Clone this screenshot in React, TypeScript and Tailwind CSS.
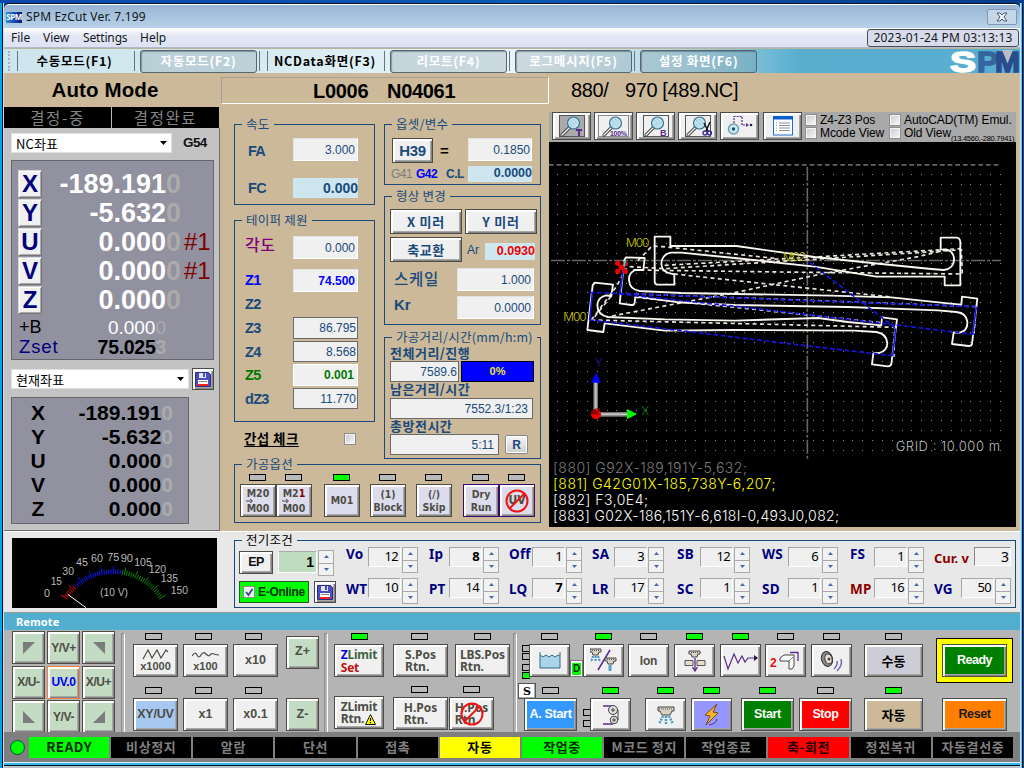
import React from "react";
import type { ReactNode } from "react";

const bevel =
  "flex shrink-0 items-center justify-center border border-[#4d4d45] shadow-[inset_1px_1px_0_#fff,inset_2px_2px_0_#fff,inset_-1px_-1px_0_#858585,inset_-2px_-2px_0_#a8a8a8]";
const sans = "[font-family:'Liberation_Sans','Noto_Sans_CJK_KR',sans-serif]";
const kr = "[font-family:'Noto_Sans_CJK_KR','Noto_Sans',sans-serif]";
const noto = "[font-family:'Noto_Sans','Noto_Sans_CJK_KR',sans-serif]";
const dejavu = "[font-family:'DejaVu_Sans_Condensed','DejaVu_Sans',sans-serif]";

function Led({ on, className = "" }: { on?: boolean; className?: string }) {
  return (
    <span
      className={`block h-[7px] w-[17px] shrink-0 border border-black ${on ? "bg-[#00ff00]" : "bg-[#b9b9b9]"} ${className}`}
    />
  );
}

function Group({
  title,
  className = "",
  legendClass = "bg-[#cbb99a] text-[#1a4a7c]",
  children,
}: {
  title: string;
  className?: string;
  legendClass?: string;
  children: ReactNode;
}) {
  return (
    <section className={`relative border border-[#1a4a7c] ${className}`}>
      <span className={`absolute -top-[9px] left-[7px] h-[15px] px-[4px] text-[12.500px] leading-[15px] tracking-[0.25px] ${kr} ${legendClass}`}>
        {title}
      </span>
      {children}
    </section>
  );
}

function Field({ className = "", children }: { className?: string; children: ReactNode }) {
  return <div className={`flex shrink-0 items-center justify-end ${className}`}>{children}</div>;
}
const sunken = "border border-[#dfe3e8] border-b-white border-r-white bg-[#f0f0f0] text-[12px] text-[#1a4a7c]";
const boxed = "border border-[#6b6b6b] bg-[#f0f0f0] text-[12px] text-[#1a4a7c]";

/* ---------- Title, menu and tool bars ---------- */

function TitleBar() {
  return (
    <header className="flex h-[24px] shrink-0 items-center rounded-t-[5px] border-t border-white bg-gradient-to-b from-[#98b4d2] to-[#b9d2ea]">
      <span className="ml-[2px] mt-[1px] flex h-[11px] w-[16px] items-center justify-center bg-gradient-to-r from-[#2a9ad8] via-[#1c4db0] to-[#0a1c78] text-[8px] font-bold tracking-[-0.5px] text-white">
        SPM
      </span>
      <span className={`ml-[4px] text-[12px] tracking-[0.17px] text-[#101820] ${noto}`}>SPM EzCut Ver. 7.199</span>
      <span className="ml-auto mr-[3px] flex h-[16px] w-[30px] items-center justify-center rounded-[2px] border border-[#8198b4] bg-[#c3d6ea]">
        <svg width="12" height="10" viewBox="0 0 12 10">
          <path d="M1 1h3l2 2 2-2h3L8 5l3 4H8L6 7 4 9H1l3-4z" fill="#eef3f8" stroke="#4a5568" strokeWidth="1" />
        </svg>
      </span>
    </header>
  );
}

function MenuBar() {
  return (
    <nav className={`flex h-[19px] shrink-0 items-center bg-gradient-to-b from-white via-[#e4e8f4] via-40% to-[#dde2f3] text-[12px] text-[#14181f] ${noto}`}>
      <span className="ml-[7px] w-[32px]">File</span>
      <span className="w-[40px]">View</span>
      <span className="w-[57px] tracking-[-0.15px]">Settings</span>
      <span>Help</span>
      <span className="ml-auto mr-[1px] flex h-[18px] w-[152px] items-center justify-center rounded-[3px] border-[1.5px] border-[#4a4d55] bg-[#d7dbea] text-[12px] tracking-[0.2px]">
        2023-01-24 PM 03:13:13
      </span>
    </nav>
  );
}

function ModeTab({ label, active, className = "" }: { label: string; active?: boolean; className?: string }) {
  return (
    <span
      className={`flex h-[23px] shrink-0 items-center justify-center text-[12.500px] font-bold tracking-[0.75px] ${kr} ${
        active
          ? "rounded-[3px] border-[1.5px] border-[#56676f] bg-[#6e8790]/25 text-white shadow-[inset_1px_1px_1px_rgba(40,60,70,0.4)]"
          : "text-black"
      } ${className}`}
    >
      {label}
    </span>
  );
}
const Sep = ({ className = "" }: { className?: string }) => (
  <span className={`h-[20px] w-px shrink-0 bg-[#66757b] ${className}`} />
);

function ToolBar() {
  return (
    <div className="flex h-[24px] shrink-0 items-center overflow-hidden bg-[linear-gradient(90deg,#cde5ed_0%,#d6eaf1_25%,#e6f3f7_45%,#eaf5f8_52%,#a9d3e3_68%,#5aafcf_78%,#58aed0_100%)]">
      <span className="ml-[4px] h-[20px] w-0 border-l-2 border-dotted border-[#a5b4bb]" />
      <Sep className="ml-[7px]" />
      <ModeTab label="수동모드(F1)" className="w-[116px] pr-[3px]" />
      <Sep />
      <ModeTab label="자동모드(F2)" active className="ml-[5px] w-[117px]" />
      <Sep className="ml-[2px]" />
      <Sep className="ml-[7px]" />
      <ModeTab label="NCData화면(F3)" className="w-[116px] pr-[2px]" />
      <Sep />
      <ModeTab label="리모트(F4)" active className="ml-[5px] w-[117px]" />
      <Sep className="ml-[2px]" />
      <ModeTab label="로그메시지(F5)" active className="ml-[5px] w-[117px]" />
      <Sep className="ml-[2px]" />
      <ModeTab label="설정 화면(F6)" active className="ml-[5px] w-[117px]" />
      <svg className="ml-auto shrink-0" width="72" height="24" viewBox="0 0 72 24">
        <g fontFamily="Liberation Sans" fontWeight="bold" fontSize="30" strokeWidth="1.500">
          <text x="2" y="22.500" fill="#fff" stroke="#fff" textLength="26" lengthAdjust="spacingAndGlyphs">S</text>
          <text x="29" y="22.500" fill="#34659f" stroke="#34659f" textLength="21" lengthAdjust="spacingAndGlyphs">P</text>
          <text x="47" y="22.500" fill="#2b4c8c" stroke="#2b4c8c" textLength="25" lengthAdjust="spacingAndGlyphs">M</text>
        </g>
        <path d="M54 1h11l-5.500 13z" fill="#b9bdc6" />
      </svg>
    </div>
  );
}

/* ---------- Left column ---------- */

function Combo({ label, className = "" }: { label: string; className?: string }) {
  return (
    <div className={`flex h-[20px] shrink-0 items-center border border-[#dde2ea] bg-white px-[4px] text-[13px] tracking-[0.1px] text-black ${kr} ${className}`}>
      {label}
      <svg className="ml-auto" width="7" height="4" viewBox="0 0 7 4"><path d="M0 0h7L3.500 4z" /></svg>
    </div>
  );
}

function Floppy() {
  return (
    <svg width="16" height="15" viewBox="0 0 16 15">
      <path d="M.5.5h13l2 2v12H.5z" fill="#4a4fc0" stroke="#2a2d80" />
      <rect x="4" y="1" width="7" height="5" fill="#dfe3ff" />
      <rect x="8" y="1" width="2" height="4" fill="#4a4fc0" />
      <rect x="3" y="8" width="10" height="4" fill="#fff" />
      <path d="M4 9.500h8" stroke="#888" />
      <rect x="3" y="12" width="10" height="2" fill="#f02020" />
    </svg>
  );
}

const axesMain = [
  ["X", "-189.191", ""],
  ["Y", "-5.632", ""],
  ["U", "0.000", "#1"],
  ["V", "0.000", "#1"],
  ["Z", "0.000", ""],
];

function LeftColumn() {
  return (
    <aside className={`flex w-[216px] shrink-0 flex-col ${sans}`}>
      <h1 className="flex h-[34px] items-center justify-center pr-[14px] text-[20.500px] font-bold tracking-[0.1px] text-black">Auto Mode</h1>
      <div className={`flex h-[21px] w-[215px] shrink-0 gap-px bg-[#b9b9b9] text-[15.500px] tracking-[1.6px] text-[#858585] ${kr}`}>
        <span className="flex w-[107px] items-center justify-center bg-black">결정-중</span>
        <span className="flex flex-1 items-center justify-center bg-black">결정완료</span>
      </div>
      <div className="flex flex-1 flex-col border-b border-r border-[#6e6e6e] bg-[#c3c3c3] pl-[7px]">
        <div className="mt-[5px] flex items-center">
          <Combo label="NC좌표" className="w-[161px]" />
          <b className="ml-[11px] text-[13.500px] tracking-[-0.6px] text-[#111]">G54</b>
        </div>
        <div className="mt-[7px] flex h-[200px] w-[203px] shrink-0 flex-col border border-[#66666c] bg-[#9191a0] pl-[6px] pt-[8px]">
          {axesMain.map(([axis, value, mark]) => (
            <div key={axis} className="flex h-[29px] shrink-0 items-center">
              <span className="flex h-[28px] w-[24px] shrink-0 items-center justify-center border border-[#d8d8d8] border-b-[#777] border-r-[#777] bg-[#f0f0f0] text-[24px] font-bold text-[#00007c] shadow-[inset_1px_1px_0_#fff,inset_-1px_-1px_0_#aaa]">
                {axis}
              </span>
              <span className="flex w-[138px] justify-end pt-[1px] text-[27px] font-bold text-white">
                {value}
                <span className="w-[14px] text-[#ababab]">0</span>
              </span>
              <span className="ml-[4px] pt-[1px] text-[24px] text-[#800000]">{mark}</span>
            </div>
          ))}
          <div className="mt-[3px] flex h-[20px] shrink-0 items-center pl-[1px] text-[18px] text-black">
            <span className="w-[70px]">+B</span>
            <span className="flex w-[77px] justify-end text-[19px] text-white">0.000<i className="not-italic text-[#ababab]">0</i></span>
          </div>
          <div className="flex h-[21px] shrink-0 items-center pl-[1px] text-[18.500px] tracking-[0.9px] text-[#00007c]">
            <span className="w-[60px]">Zset</span>
            <span className="flex w-[87px] justify-end text-[19.500px] font-bold tracking-[-0.300px] text-black">75.025<i className="not-italic text-[#ababab]">3</i></span>
          </div>
        </div>
        <div className="mt-[8px] flex h-[22px] shrink-0 items-center">
          <Combo label="현재좌표" className="w-[178px]" />
          <span className={`ml-[3px] h-[22px] w-[22px] bg-[#f0f0f0] ${bevel}`}><Floppy /></span>
        </div>
        <div className="mt-[7px] flex h-[127px] w-[178px] shrink-0 flex-col border border-[#66666c] bg-[#9191a0] pt-[2px]">
          {axesMain.map(([axis, value]) => (
            <div key={axis} className="flex h-[24px] shrink-0 items-center text-[21px] font-bold text-black">
              <span className="w-[52px] text-center">{axis}</span>
              <span className="flex w-[109px] justify-end">{value}<i className="not-italic text-[#ababab]">0</i></span>
            </div>
          ))}
        </div>
      </div>
    </aside>
  );
}

/* ---------- Centre column ---------- */

const labelB = "text-[14.500px] font-bold tracking-[-0.7px] text-[#1a4a7c]";

function OptionCell({ on, className = "", button, children }: { on?: boolean; className?: string; button?: string; children: ReactNode }) {
  return (
    <div className={`flex w-[36px] shrink-0 flex-col items-center ${className}`}>
      <Led on={on} className="mr-[2px]" />
      <span className={`mt-[3px] h-[33px] w-[36px] flex-col text-center text-[10.500px] font-bold leading-[13px] text-[#4d4d45] ${dejavu} ${bevel} bg-[#dcdcec] ${button ?? ""}`}>
        {children}
      </span>
    </div>
  );
}

const SmallArrow = () => (
  <svg className="-ml-[17px] block shrink-0" width="7" height="4" viewBox="0 0 7 4">
    <path d="M0 2h6M4 0l2.500 2L4 4" fill="none" stroke="#4d4d45" />
  </svg>
);

function NoSign({ size = 24 }: { size?: number }) {
  return (
    <svg className="absolute" width={size} height={size} viewBox="0 0 24 24" fill="none" stroke="#f01414" strokeWidth="2">
      <circle cx="12" cy="12" r="10.500" />
      <path d="M19.500 4.500l-15 15" />
    </svg>
  );
}

function CheckBox({ className = "" }: { className?: string }) {
  return <span className={`block h-[12px] w-[12px] shrink-0 border border-[#8e8e8e] bg-gradient-to-br from-[#c9c9cf] to-[#fafafa] shadow-[inset_0_0_0_1px_#f4f4f4] ${className}`} />;
}

function CenterColumn() {
  const heading = `text-[13px] font-bold tracking-[0.5px] ${kr}`;
  return (
    <section className={`flex w-[329px] shrink-0 flex-col ${sans}`}>
      <div className="ml-[1px] mt-[4px] flex h-[27px] shrink-0 items-center border border-[#a89f98] border-b-white border-r-white pl-[91px] text-[20px] font-bold text-black">
        <span className="w-[74px] tracking-[-0.3px]">L0006</span>
        <span className="tracking-[-0.3px]">N04061</span>
      </div>
      <div className="ml-[14px] flex h-[360px] shrink-0 gap-[9px]">
        <div className="flex w-[141px] shrink-0 flex-col">
          <Group title="속도" className="mt-[20px] h-[81px] shrink-0 pl-[13px]">
            <div className="mt-[13px] flex h-[23px] items-center">
              <span className={`w-[45px] pt-[4px] ${labelB}`}>FA</span>
              <Field className={`h-[23px] w-[65px] pr-[2px] ${sunken}`}>3.000</Field>
            </div>
            <div className="mt-[17px] flex h-[20px] items-center">
              <span className={`w-[45px] ${labelB}`}>FC</span>
              <Field className="h-[20px] w-[65px] bg-[#cde6ef] text-[14px] font-bold text-[#1a4a7c]">0.000</Field>
            </div>
          </Group>
          <Group title="테이퍼 제원" className="mt-[15px] h-[202px] shrink-0 pl-[10px]">
            <div className="mt-[15px] flex h-[23px] items-center">
              <span className={`-mt-[7px] w-[48px] text-[16px] font-medium tracking-[0.6px] text-[#800080] ${kr}`}>각도</span>
              <Field className={`h-[23px] w-[65px] pr-[2px] ${sunken}`}>0.000</Field>
            </div>
            <div className="mt-[10px] flex h-[23px] items-center">
              <span className="w-[48px] text-[14.500px] font-bold tracking-[-0.7px] text-[#0000ff]">Z1</span>
              <Field className={`h-[23px] w-[65px] pr-[2px] font-bold ${sunken}`}><span className="text-[#0000ff]">74.500</span></Field>
            </div>
            <div className={`flex h-[25px] items-center ${labelB}`}>Z2</div>
            <div className="flex h-[22px] items-center">
              <span className={`w-[48px] ${labelB}`}>Z3</span>
              <Field className={`h-[22px] w-[65px] pr-[1px] ${boxed}`}>86.795</Field>
            </div>
            <div className="mt-[2px] flex h-[21px] items-center">
              <span className={`w-[48px] pt-[1px] ${labelB}`}>Z4</span>
              <Field className={`h-[21px] w-[65px] pr-[1px] ${boxed}`}>8.568</Field>
            </div>
            <div className="mt-[2px] flex h-[22px] items-center">
              <span className="w-[48px] text-[14.500px] font-bold tracking-[-0.7px] text-[#007a00]">Z5</span>
              <Field className="h-[22px] w-[65px] border border-white bg-[#f0f0f0] pr-[3px] text-[12px] font-bold text-[#007a00]">0.001</Field>
            </div>
            <div className="mt-[2px] flex h-[21px] items-center">
              <span className={`w-[48px] pt-[2px] ${labelB}`}>dZ3</span>
              <Field className={`h-[21px] w-[65px] pr-[1px] ${boxed} bg-[#cde6ef]`}>11.770</Field>
            </div>
          </Group>
          <div className="mt-[10px] flex items-center pl-[10px]">
            <span className={`w-[100px] text-[13.500px] font-bold tracking-[0.4px] text-black underline underline-offset-2 ${kr}`}>간섭 체크</span>
            <CheckBox />
          </div>
        </div>
        <div className="flex w-[157px] shrink-0 flex-col">
          <Group title="옵셋/변수" className="mt-[20px] h-[61px] shrink-0">
            <div className="mt-[13px] flex h-[25px] items-center pl-[7px]">
              <span className={`h-[25px] w-[41px] bg-[#f0f0f0] text-[15px] font-bold tracking-[-0.3px] text-[#1a4a7c] ${bevel}`}>H39</span>
              <b className="ml-[7px] w-[28px] text-[15px] text-black">=</b>
              <Field className={`-mt-[2px] h-[23px] w-[64px] pr-[1px] ${sunken}`}>0.1850</Field>
            </div>
            <div className="mt-[2px] flex h-[17px] items-center pl-[6px] text-[12px] font-bold tracking-[-0.5px]">
              <span className="w-[25px] font-normal text-[#7d7d7d]">G41</span>
              <span className="w-[30px] text-[#0000ff]">G42</span>
              <span className="w-[22px] text-[#1a4a7c]">C.L</span>
              <Field className="h-[16px] w-[64px] bg-[#cde6ef] text-[12.500px] tracking-normal text-[#1a4a7c]">0.0000</Field>
            </div>
          </Group>
          <Group title="형상 변경" className="mt-[11px] h-[129px] shrink-0 text-[#1a4a7c]">
            <div className={`mt-[12px] flex gap-[3px] pl-[5px] text-[13px] font-bold tracking-[0.8px] ${kr}`}>
              <span className={`h-[25px] w-[72px] bg-[#f0f0f0] ${bevel}`}>X 미러</span>
              <span className={`h-[25px] w-[72px] bg-[#f0f0f0] ${bevel}`}>Y 미러</span>
            </div>
            <div className="mt-[3px] flex items-center pl-[5px]">
              <span className={`h-[25px] w-[72px] bg-[#f0f0f0] text-[13px] font-bold tracking-[0.5px] ${kr} ${bevel}`}>축교환</span>
              <span className="w-[23px] pl-[5px] text-[12px]">Ar</span>
              <Field className="mt-[4px] h-[17px] w-[50px] bg-[#cde6ef] text-[12.500px] font-bold text-[#f00000]">0.0930</Field>
            </div>
            <div className="mt-[6px] flex h-[23px] items-center pl-[9px]">
              <span className={`-mt-[2px] w-[63px] text-[15.500px] font-medium tracking-[0.7px] ${kr}`}>스케일</span>
              <Field className={`h-[23px] w-[77px] pr-[2px] ${sunken}`}>1.000</Field>
            </div>
            <div className="mt-[5px] flex h-[23px] items-center pl-[9px]">
              <span className="-mt-[7px] w-[63px] text-[15px] font-bold">Kr</span>
              <Field className={`h-[23px] w-[77px] pr-[2px] ${sunken}`}>0.0000</Field>
            </div>
          </Group>
          <Group title="가공거리/시간(mm/h:m)" className="mt-[12px] h-[122px] shrink-0 pl-[5px] text-[#1a4a7c]">
            <div className={`mt-[7px] h-[16px] leading-[15px] ${heading}`}>전체거리/진행</div>
            <div className="flex gap-[2px]">
              <Field className={`h-[21px] w-[69px] pr-[1px] ${boxed}`}>7589.6</Field>
              <span className="flex h-[21px] w-[73px] items-center justify-center border border-black bg-[#0000ff] text-[11px] font-bold text-[#e6e632]">0%</span>
            </div>
            <div className={`h-[16px] leading-[14px] ${heading}`}>남은거리/시간</div>
            <Field className={`h-[21px] w-[143px] pr-[4px] ${boxed}`}>7552.3/1:23</Field>
            <div className={`h-[15px] leading-[14px] ${heading}`}>총방전시간</div>
            <div className="flex gap-[6px]">
              <Field className={`h-[21px] w-[109px] pr-[4px] ${boxed}`}>5:11</Field>
              <span className="mt-[1px] flex h-[19px] w-[23px] items-center justify-center rounded-[2px] border border-[#888] bg-gradient-to-b from-[#f6f6f6] to-[#cfcfcf] text-[12px] font-bold shadow-[inset_0_0_0_1px_#fff]">R</span>
            </div>
          </Group>
        </div>
      </div>
      <Group title="가공옵션" className="ml-[14px] h-[59px] w-[307px] shrink-0">
        <div className="flex pl-[5px] pt-[9px]">
          <OptionCell><span className="leading-[11px]">M20</span><SmallArrow /><span className="leading-[11px]">M00</span></OptionCell>
          <OptionCell><span className="leading-[11px]">M2<span className="text-[#800000]">1</span></span><SmallArrow /><span className="leading-[11px]">M00</span></OptionCell>
          <OptionCell on className="ml-[12px]">M01</OptionCell>
          <OptionCell className="ml-[10px]"><span>(1)</span><span>Block</span></OptionCell>
          <OptionCell className="ml-[10px]"><span>(/)</span><span>Skip</span></OptionCell>
          <OptionCell className="ml-[11px]" button="!border-[#3c0a6e]"><span>Dry</span><span>Run</span></OptionCell>
          <OptionCell button="relative !border-[#3c0a6e]"><span className="text-[12px]">UV</span><NoSign /></OptionCell>
        </div>
      </Group>
    </section>
  );
}

/* ---------- Viewer ---------- */

function Magnifier({ children, bg = "#f0f0f0", dotted }: { children?: ReactNode; bg?: string; dotted?: boolean }) {
  return (
    <svg width="31" height="23" viewBox="0 0 31 23">
      {dotted ? (
        <rect x=".5" y=".5" width="30" height="21" fill="none" stroke="#222" strokeDasharray="1 1" />
      ) : (
        <rect x="3.500" y=".5" width="25" height="21" fill={bg} stroke="#555" />
      )}
      <path d="M6 20l9-9" stroke="#444" strokeWidth="3.200" strokeLinecap="round" />
      <path d="M6 20l9-9" stroke="#f4f4f4" strokeWidth="1.400" strokeLinecap="round" />
      <circle cx="17.500" cy="8" r="6" fill="#bfe0ee" stroke="#3b7591" strokeWidth="1.200" />
      <path d="M14 5l5 6M17 4l4 5M14 9l3 3" stroke="#8fbfd2" strokeDasharray="1 1" />
      {children}
    </svg>
  );
}

function ViewerTools() {
  const purple = { fill: "#5b2a8c", fontFamily: "Liberation Sans", fontWeight: "bold" } as const;
  const btn = `h-[28px] w-[39px] bg-[#f0f0f0] ${bevel}`;
  return (
    <div className="flex h-[30px] shrink-0 items-start bg-[#a9a9a9] pl-[3px]">
      <div className="flex gap-[3px]">
        <span className={btn}><Magnifier bg="#aaa"><path d="M20 14h6v2h-2v5h-2v-5h-2z" fill="#5b2a8c" /></Magnifier></span>
        <span className={btn}><Magnifier dotted><text x="12" y="21" fontSize="7" textLength="17" {...purple}>100%</text></Magnifier></span>
        <span className={btn}><Magnifier><text x="20" y="21" fontSize="9" {...purple}>B</text></Magnifier></span>
        <span className={btn}>
          <Magnifier>
            <path d="M22 8l4 8M28 7l-4 9" stroke="#111" strokeWidth="1.500" />
            <circle cx="23" cy="18" r="2" fill="none" stroke="#3a2a9c" strokeWidth="1.300" />
            <circle cx="27.500" cy="18" r="2" fill="none" stroke="#3a2a9c" strokeWidth="1.300" />
          </Magnifier>
        </span>
        <span className={btn}>
          <svg width="31" height="22" viewBox="0 0 31 22" fill="none">
            <path d="M10 14V1.500h8V10h5" stroke="#5b2a8c" strokeWidth="1.200" strokeDasharray="2 1" />
            <path d="M22 8l3 2-3 2z" fill="#5b2a8c" />
            <circle cx="9.500" cy="14" r="5" fill="#cfe9f3" stroke="#6a9fb5" strokeWidth="1.500" />
            <circle cx="9.500" cy="14" r="1.700" fill="#14506c" />
            <circle cx="27" cy="10" r="1.300" fill="#222" />
          </svg>
        </span>
      </div>
      <span className={`ml-[4px] ${btn}`}>
        <svg width="22" height="20" viewBox="0 0 22 20">
          <rect x="1.500" y="1" width="19" height="18" fill="#fff" stroke="#1d6fd0" />
          <rect x="1" y="0" width="20" height="3.500" fill="#0a5fd0" />
          <path d="M4 7h1M7 7h11M4 9.500h1M7 9.500h11M4 12h1M7 12h11M4 14.500h1M7 14.500h11" stroke="#8a8f98" />
        </svg>
      </span>
      <div className="ml-[3px] grid grid-cols-[84px_1fr] grid-rows-[13px_13px] pt-[1px] text-[12px] text-black">
        {["Z4-Z3 Pos", "AutoCAD(TM) Emul.", "Mcode View"].map((t) => (
          <span key={t} className="flex items-center gap-[3px] tracking-[-0.1px]"><CheckBox />{t}</span>
        ))}
        <span className="flex items-center gap-[3px] tracking-[-0.1px]">
          <CheckBox />Old View
          <span className="-ml-[3px] mt-[12px] text-[7.500px] tracking-[-0.25px]">(13.4560,-280.7941)</span>
        </span>
      </div>
    </div>
  );
}

const gridDots = Array.from({ length: 30 }, (_, r) =>
  Array.from({ length: 46 }, (_, c) => {
    const x = Math.round((28 + c * 29.5) / 3) * 3;
    const y = Math.round((103 + r * 29.5) / 3) * 3;
    return `M${x} ${y + 1.5}h3`;
  }).join(""),
).join("");

function Plot() {
  return (
    <svg className="block shrink-0 bg-black" width="467" height="318" viewBox="3 6 1401 954" fill="none">
      <path d={gridDots} stroke="#8a8a8a" strokeWidth="3" />
      <path d="M3 74.500H1359" stroke="#666" strokeWidth="5" strokeDasharray="14 9" />
      <path d="M9 361.500H1359M778 80V960" stroke="#666" strokeWidth="5" strokeDasharray="42 6 9 6" />
      <g stroke="#e8e4de" strokeWidth="5" strokeDasharray="12 10">
        <path d="M270 362L312 318L345 320L690 356" />
        <path d="M350 376L780 352L1236 326" />
        <path d="M245 380L350 386L700 364L1110 338L1236 330" />
        <path d="M255 390L700 396L1243 402L1240 327" />
        <path d="M378 402L660 432L1030 471" />
        <path d="M192 528L560 458L820 402L1110 350L1200 328" />
        <path d="M130 540L205 440L238 380M140 530L190 468" />
        <path d="M130 540L1040 562L1038 650" />
        <path d="M262 472L600 506L1000 548" />
        <path d="M260 462L700 478L1285 500L1278 580" />
      </g>
      <g stroke="#fbf8f2" strokeWidth="5.500" strokeLinejoin="round">
        <path d="M320 290H367V318H565L800 351L1000 372L1150 387L1188 390C1206 388 1218 376 1218 358C1218 344 1210 332 1200 330L1178 328V293H1226Q1236 294 1237 306V436H1190V410H985L800 380L560 354L400 338H370C350 340 340 356 340 370C340 388 352 398 366 400L379 403V434H326Q320 432 320 424Z" />
        <path d="M234 352L290 354L286 390L262 390C248 396 242 408 243 420C244 440 256 450 275 453L400 459L850 467L1030 472L1200 490L1240 494L1242 470L1288 476L1272 612Q1270 618 1262 618L1212 612L1217 577L1235 578C1252 574 1259 560 1258 545C1256 526 1244 518 1225 516L1170 511L900 501L560 495L400 488L262 470L260 488Q258 496 250 495L215 490L229 360Z" />
        <path d="M140 428L195 434L190 468L174 466C156 470 149 480 148 495C148 515 160 527 180 531L350 538L560 542L810 534L900 546L1000 556L1002 532L1047 538L1030 672Q1028 679 1020 679L972 673L976 640L994 639C1010 634 1018 624 1018 609C1017 590 1006 580 985 576L920 572L560 570L350 572L170 550L166 576L118 570L134 436Z" />
      </g>
      <g stroke="#1414e6" strokeWidth="5">
        <path d="M125 457L215 460L780 482L1285 500M215 462L600 503L1000 550L1280 583M125 540L400 572L780 618L1042 648M785 368L985 520L1042 565" strokeDasharray="14 8" />
        <path d="M133 458L125 540M227 380L216 460M1043 565L1034 648M1285 500L1274 583" />
      </g>
      <g fill="#c8c800" fontFamily="Inter, Noto Sans CJK KR" fontWeight="300" fontSize="36">
        <text x="234" y="321" textLength="70">M00</text>
        <text x="704" y="363" textLength="70">M02</text>
        <text x="46" y="543" textLength="70">M00</text>
      </g>
      <g fill="#f00000">
        <circle cx="209" cy="370" r="8" /><circle cx="232" cy="371" r="8" />
        <circle cx="209" cy="394" r="8" /><circle cx="232" cy="394" r="8" /><circle cx="220" cy="382" r="8" />
      </g>
      <path d="M209 370L232 394M232 370L209 394" stroke="#f00000" strokeWidth="4" />
      <path d="M232 362L228 378" stroke="#00f0f0" strokeWidth="5" />
      <path d="M143 725V815M150 823H240" stroke="#777" strokeWidth="14" />
      <path d="M143 725V815M150 823H240" stroke="#c4c4c4" strokeWidth="6" />
      <path d="M129 728L144 698L159 728Z" fill="#0000ff" />
      <path d="M237 807L267 822L237 838Z" fill="#00ff00" />
      <circle cx="144" cy="823" r="15" fill="#f00000" />
      <path d="M129 823A15 15 0 0 1 144 808L150 822Z" fill="#8c0000" />
      <g fontFamily="Inter" fontWeight="300" fontSize="36">
        <text x="140" y="682" fill="#1c1ca0">Y</text>
        <text x="140" y="826" fill="#8c0000" fontSize="28">Z</text>
        <text x="280" y="824" fill="#108010">X</text>
      </g>
      <text x="1043" y="933" fill="#bdbdbd" fontFamily="Inter, Noto Sans" fontWeight="300" fontSize="39" textLength="313">GRID : 10.000 m</text>
    </svg>
  );
}

function Viewer() {
  return (
    <section className={`flex w-[467px] shrink-0 flex-col ${sans}`}>
      <div className="flex h-[39px] shrink-0 items-center whitespace-pre pl-[22px] pb-[6px] text-[20px] tracking-[-0.4px] text-black">
        <span className="w-[54px]">880/</span>970 [489.NC]
      </div>
      <ViewerTools />
      <Plot />
      <div className="flex h-[67px] shrink-0 flex-col bg-black pl-[4px] text-[14px] font-light leading-[16px] tracking-[0.48px] text-white [font-family:Inter,'Noto_Sans_CJK_KR',sans-serif]">
        <span className="text-[#7d7d7d]">[880] G92X-189,191Y-5,632;</span>
        <span className="text-[#ffff00]">[881] G42G01X-185,738Y-6,207;</span>
        <span>[882] F3,0E4;</span>
        <span className="tracking-[0.36px]">[883] G02X-186,151Y-6,618I-0,493J0,082;</span>
      </div>
    </section>
  );
}

/* ---------- Electrical conditions ---------- */

const ticks = Array.from({ length: 51 }, (_, i) => {
  const a = ((-58 + (116 * i) / 50) * Math.PI) / 180;
  const len = i % 5 === 0 ? 23 : 14;
  const x = 340 + Math.sin(a) * 162;
  const y = 802 - Math.cos(a) * 160;
  const d = `M${x.toFixed(1)} ${y.toFixed(1)}L${(x + Math.sin(a) * len).toFixed(1)} ${(y - Math.cos(a) * len).toFixed(1)}`;
  return { d, color: i < 7 ? "#ff1010" : i < 29 ? "#1414ff" : "#0a8a0a" };
});

function Meter() {
  return (
    <svg className="ml-[8px] mt-[6px] block shrink-0 bg-black" width="205" height="70" viewBox="36 534 615 210" fill="none">
      {ticks.map((t) => <path key={t.d} d={t.d} stroke={t.color} strokeWidth="3" />)}
      <path d="M203 703L258 743" stroke="#fff" strokeWidth="3" />
      <g fill="#b9b9b9" fontFamily="Liberation Sans" fontSize="35" lengthAdjust="spacingAndGlyphs">
        <text x="132" y="710" textLength="18" lengthAdjust="spacingAndGlyphs">0</text>
        <text x="152" y="675" textLength="34" lengthAdjust="spacingAndGlyphs">15</text>
        <text x="187" y="644" textLength="35" lengthAdjust="spacingAndGlyphs">30</text>
        <text x="228" y="619" textLength="36" lengthAdjust="spacingAndGlyphs">45</text>
        <text x="273" y="606" textLength="36" lengthAdjust="spacingAndGlyphs">60</text>
        <text x="322" y="603" textLength="36" lengthAdjust="spacingAndGlyphs">75</text>
        <text x="362" y="606" textLength="37" lengthAdjust="spacingAndGlyphs">90</text>
        <text x="403" y="617" textLength="52" lengthAdjust="spacingAndGlyphs">105</text>
        <text x="446" y="640" textLength="52" lengthAdjust="spacingAndGlyphs">120</text>
        <text x="482" y="666" textLength="52" lengthAdjust="spacingAndGlyphs">135</text>
        <text x="512" y="702" textLength="52" lengthAdjust="spacingAndGlyphs">150</text>
        <text x="300" y="707" textLength="84" lengthAdjust="spacingAndGlyphs">(10 V)</text>
      </g>
    </svg>
  );
}

function Spinner({ tall = "h-[26px]" }: { tall?: string }) {
  return (
    <span className={`flex w-[16px] shrink-0 flex-col gap-px border border-[#a9a9a9] bg-[#a9a9a9] ${tall}`}>
      <span className="flex flex-1 items-center justify-center bg-[#f2f2f2]"><svg width="5" height="3" viewBox="0 0 5 3"><path d="M0 3h5L2.500 0z" fill="#4a66b0" /></svg></span>
      <span className="flex flex-1 items-center justify-center bg-[#f2f2f2]"><svg width="5" height="3" viewBox="0 0 5 3"><path d="M0 0h5L2.500 3z" fill="#4a66b0" /></svg></span>
    </span>
  );
}

function Param({ name, value, bold, red, className }: { name: string; value: string; bold?: boolean; red?: boolean; className: string }) {
  return (
    <div className={`flex h-[27px] shrink-0 items-start [&>span:first-child]:pt-[1px] ${className}`}>
      <span className={`flex-1 text-[13.500px] font-bold tracking-[0.2px] ${noto} ${red ? "text-[#8c0000]" : "text-[#000080]"}`}>{name}</span>
      <span className={`mr-[1px] flex h-[20px] w-[33px] items-start justify-end border border-[#a5a5a5] border-b-white border-r-white bg-[#f0f0f0] pr-[2px] pt-[1px] text-[13px] leading-[14px] tracking-[-0.7px] text-black ${bold ? "font-bold" : ""} ${noto}`}>
        {value}
      </span>
      <Spinner />
    </div>
  );
}

function Electrical() {
  return (
    <div className={`flex h-[82px] shrink-0 border-b border-t border-b-[#9a9a9a] border-t-white bg-[#e8e8e8] ${sans}`}>
      <Meter />
      <Group title="전기조건" legendClass="bg-[#e8e8e8] text-black" className="ml-[17px] mt-[8px] flex h-[68px] w-[782px] shrink-0">
        <div className="flex w-[111px] shrink-0 flex-col pl-[4px] pt-[9px]">
          <div className="flex items-start">
            <span className={`mt-[1px] h-[23px] w-[34px] bg-[#f0f0f0] text-[12.500px] font-bold tracking-[-0.5px] text-[#111] ${bevel}`}>EP</span>
            <span className="ml-[5px] mt-[1px] flex h-[22px] w-[39px] items-center justify-end border border-white border-t-[#aaa] bg-[#c0dcc0] pr-[2px] text-[14px] font-bold text-black">1</span>
            <span className="ml-[1px]"><Spinner tall="h-[26px]" /></span>
          </div>
          <div className="mt-[5px] flex">
            <span className="flex h-[22px] w-[70px] items-center justify-center gap-[3px] border border-[#2a5a2a] bg-[#00ff00] text-[12px] font-bold tracking-[-0.3px] text-[#063006]">
              <svg width="12" height="12" viewBox="0 0 12 12"><rect x=".5" y=".5" width="11" height="11" fill="#eef0f4" stroke="#8e8e8e" /><path d="M3 6l2.500 3L9.500 3" fill="none" stroke="#33448c" strokeWidth="1.800" /></svg>
              E-Online
            </span>
            <span className={`ml-[5px] h-[22px] w-[22px] bg-[#f0f0f0] ${bevel}`}><Floppy /></span>
          </div>
        </div>
        <div className="flex flex-col pt-[6px]">
          <div className="flex h-[31px] shrink-0">
            <Param name="Vo" value="12" className="mr-[11px] w-[72px]" />
            <Param name="Ip" value="8" bold className="mr-[10px] w-[70px]" />
            <Param name="Off" value="1" className="mr-[10px] w-[73px]" />
            <Param name="SA" value="3" className="mr-[13px] w-[72px]" />
            <Param name="SB" value="12" className="mr-[12px] w-[73px]" />
            <Param name="WS" value="6" className="mr-[12px] w-[76px]" />
            <Param name="FS" value="1" className="mr-[10px] w-[74px]" />
            <div className="flex w-[77px] shrink-0 items-start">
              <span className={`flex-1 pt-[5px] text-[13px] font-bold text-[#8c0000] ${noto}`}>Cur. v</span>
              <span className={`flex h-[19px] w-[37px] items-center justify-end border border-white border-l-[#888] border-t-[#888] bg-[#f0f0f0] pr-[1px] text-[14px] text-black ${noto}`}>3</span>
            </div>
          </div>
          <div className="flex h-[28px] shrink-0">
            <Param name="WT" value="10" className="mr-[11px] w-[72px] [&>span:first-child]:!pt-[5px]" />
            <Param name="PT" value="14" className="mr-[10px] w-[70px] [&>span:first-child]:!pt-[5px]" />
            <Param name="LQ" value="7" bold className="mr-[10px] w-[73px] [&>span:first-child]:!pt-[5px]" />
            <Param name="LR" value="17" className="mr-[13px] w-[72px] [&>span:first-child]:!pt-[5px]" />
            <Param name="SC" value="1" className="mr-[12px] w-[73px] [&>span:first-child]:!pt-[5px]" />
            <Param name="SD" value="1" className="mr-[12px] w-[76px] [&>span:first-child]:!pt-[5px]" />
            <Param name="MP" value="16" red className="mr-[10px] w-[74px] [&>span:first-child]:!pt-[5px]" />
            <Param name="VG" value="50" className="w-[77px] [&>span:first-child]:!pt-[5px]" />
          </div>
        </div>
      </Group>
    </div>
  );
}

/* ---------- Remote panel ---------- */

function Ctl({ w, on, ml = "", led = "", bg = "bg-[#f0f0f0]", text = "text-[13px] text-[#4d4d45]", children }: { w: string; on?: boolean; ml?: string; led?: string; bg?: string; text?: string; children: ReactNode }) {
  return (
    <div className={`flex shrink-0 flex-col items-center ${w} ${ml}`}>
      <Led on={on} className={led} />
      <span className={`relative mt-[4px] h-[33px] font-bold ${w} ${bg} ${text} ${bevel}`}>{children}</span>
    </div>
  );
}

const Divider = ({ className = "" }: { className?: string }) => (
  <span className={`mt-[3px] h-[99px] w-[4px] shrink-0 border-l border-r border-t border-l-[#8c8c8c] border-r-white border-t-[#8c8c8c] ${className}`} />
);

function Tri({ d }: { d: string }) {
  return <svg width="12" height="12" viewBox="0 0 12 12"><path d={d} fill="#7c7c7c" /></svg>;
}

function JogPad() {
  const cell = `h-[33px] w-[33px] bg-[#c3dcc3] text-[12px] font-bold tracking-[-0.4px] text-[#4d4d45] ${bevel}`;
  return (
    <div className="ml-[8px] mt-[1px] grid h-[101px] shrink-0 grid-cols-[33px_33px_33px] grid-rows-[33px_33px_33px] gap-x-[2px] gap-y-[1.500px] overflow-hidden">
      <span className={cell}><Tri d="M0 0h12L0 12z" /></span>
      <span className={cell}>Y/V+</span>
      <span className={cell}><Tri d="M0 0h12v12z" /></span>
      <span className={cell}>X/U-</span>
      <span className={`${cell} !border-[#f08050] !text-[#0000ff]`}>UV.0</span>
      <span className={cell}>X/U+</span>
      <span className={cell}><Tri d="M0 0v12h12z" /></span>
      <span className={cell}>Y/V-</span>
      <span className={cell}><Tri d="M12 0v12H0z" /></span>
    </div>
  );
}

const two = "text-[11px] leading-[12px] text-[#4d4d45]";
const twoWide = "text-[12px] leading-[12px] text-[#4d4d45]";

function Nozzle({ x = 0, y = 0 }: { x?: number; y?: number }) {
  return (
    <g transform={`translate(${x} ${y})`}>
      <path d="M0 0h11v3H9l-1 3H3L2 3H0z" fill="#d9d2c4" stroke="#444" />
      <path d="M2 1.500h8" stroke="#555" strokeDasharray="1 1" />
    </g>
  );
}

const MiniLed = ({ on, className = "" }: { on?: boolean; className?: string }) => (
  <span className={`block h-[7px] w-[8px] shrink-0 border border-r-0 border-black ${on ? "bg-[#00ff00]" : ""} ${className}`} />
);

function Remote() {
  return (
    <section className={`flex h-[102px] shrink-0 bg-[#b4b4b4] ${sans}`}>
      <JogPad />
      <Divider className="ml-[6px]" />
      <div className="ml-[8px] flex w-[144px] shrink-0 flex-col">
        <div className="mt-[3px] flex gap-[5px]">
          <Ctl w="w-[45px]" led="mr-[4px]" text={two}>
            <span className="flex flex-col items-center text-[11px]">
              <svg width="27" height="11" viewBox="0 0 27 11"><path d="M1 10L6 1l4 8 5-8 4 8 5-8 2 2" fill="none" stroke="#4d4d45" strokeWidth="1.200" /></svg>
              x1000
            </span>
          </Ctl>
          <Ctl w="w-[45px]" led="mr-[4px]" text={two}>
            <span className="flex flex-col items-center text-[11px]">
              <svg width="27" height="11" viewBox="0 0 27 11"><path d="M0 7q3-5 5-1t4 0 5-1 4 1 4-1 5 1" fill="none" stroke="#4d4d45" strokeWidth="1.200" /></svg>
              x100
            </span>
          </Ctl>
          <Ctl w="w-[45px]" led="mr-[4px]" text="text-[12.500px] text-[#4d4d45]">x10</Ctl>
        </div>
        <div className="mt-[10px] flex gap-[5px]">
          <Ctl w="w-[45px]" led="mr-[5px]" bg="bg-[#a6c8f0]" text="text-[12.500px] tracking-[-0.2px] text-[#4d4d45]">XY/UV</Ctl>
          <Ctl w="w-[45px]" led="mr-[4px]" text="text-[12.500px] text-[#4d4d45]">x1</Ctl>
          <Ctl w="w-[45px]" led="mr-[4px]" text="text-[12.500px] text-[#4d4d45]">x0.1</Ctl>
        </div>
      </div>
      <div className="ml-[9px] flex w-[33px] shrink-0 flex-col gap-[29px] pt-[6px] text-[12.500px] font-bold text-[#4d4d45]">
        <span className={`h-[33px] w-[33px] bg-[#c3dcc3] pb-[2px] ${bevel}`}>Z+</span>
        <span className={`h-[33px] w-[33px] bg-[#c3dcc3] ${bevel}`}>Z-</span>
      </div>
      <Divider className="ml-[5px]" />
      <div className={`ml-[6px] flex w-[176px] shrink-0 flex-col ${noto}`}>
        <div className="mt-[3px] flex">
          <Ctl on w="w-[50px]" text="text-[12px] leading-[13px] tracking-[-0.2px] text-[#3c6440]"><span><span className="text-[#0000e6]">Z</span>Limit<br /><span className="text-[#c01010]">Set</span></span></Ctl>
          <Ctl ml="ml-[9px]" led="mr-[2px]" w="w-[55px]" text={twoWide}><span>S.Pos<br />Rtn.</span></Ctl>
          <Ctl ml="ml-[7px]" w="w-[55px]" text={`${twoWide} tracking-[-0.1px]`}><span>LBS.Pos<br />Rtn.</span></Ctl>
        </div>
        <div className="mt-[9px] flex">
          <span className={`mt-[10px] h-[33px] w-[50px] bg-[#f0f0f0] font-bold tracking-[-0.2px] ${twoWide} ${bevel}`}>
            <span>ZLimit<br />Rtn.<svg className="ml-[1px] inline-block align-[-2px]" width="11" height="11" viewBox="0 0 11 11"><path d="M5.500.5l5 10H.5z" fill="#ff0" stroke="#111" /><path d="M5.500 4v3M5.500 8v1.300" stroke="#111" strokeWidth="1.200" /></svg></span>
          </span>
          <Ctl ml="ml-[9px]" led="mr-[2px]" w="w-[55px]" text={twoWide}><span>H.Pos<br />Rtn.</span></Ctl>
          <Ctl ml="ml-[1px]" w="w-[45px]" text={twoWide}><span>H.Pos<br />Rtn.</span><NoSign size={24} /></Ctl>
        </div>
      </div>
      <Divider className="ml-[3px]" />

      <div className="flex w-[347px] shrink-0 flex-col">
        <div className="mt-[3px] flex h-[44px] shrink-0">
          <div className="ml-[5px] flex w-[7px] shrink-0 flex-col pt-[12px]">
            <MiniLed /><MiniLed className="mt-[1px]" /><MiniLed className="mt-[4px]" /><MiniLed on className="mt-[1px]" />
          </div>
          <Ctl w="w-[41px]">
            <svg width="22" height="17" viewBox="0 0 22 17"><path d="M1 3l3 2 3-2 3 2 3-2 3 2 3-2 2 1v12H1z" fill="#a9d4ea" /><path d="M1 0v16h20V0M1 3l3 2 3-2 3 2 3-2 3 2 3-2 2 1" fill="none" stroke="#35687e" /></svg>
          </Ctl>
          <span className="mt-[27px] flex h-[17px] w-[13px] shrink-0 items-center justify-center border border-[#777] bg-white">
            <span className="flex h-[12px] w-[9px] items-center justify-center bg-[#00ff00] text-[10px] font-bold text-[#052805]">D</span>
          </span>
          <Ctl on w="w-[41px]">
            <svg width="28" height="25" viewBox="0 0 28 25"><Nozzle x={0} y={1} /><path d="M3 8l-2 6M5.500 8v6M8 8l2 6" stroke="#3e8cc0" strokeWidth="2" strokeDasharray="2 1" /><path d="M20 2L8 22" stroke="#5b2a8c" strokeWidth="1.500" /><Nozzle x={15} y={10} /><path d="M20 17v6" stroke="#5aa0cc" strokeWidth="3" /></svg>
          </Ctl>
          <Ctl ml="ml-[4px]" w="w-[41px]" text="text-[12px] tracking-[-0.2px] text-[#4d4d45]">Ion</Ctl>
          <Ctl on ml="ml-[5px]" w="w-[41px]">
            <svg width="22" height="22" viewBox="0 0 22 22"><Nozzle x={5} y={1} /><path d="M1 10.500h8v5H1zM13 10.500h8v5h-8z" fill="#e6dccd" stroke="#555" /><path d="M11 8v12M8.500 17l2.500 4 2.500-4" fill="none" stroke="#5b2a8c" strokeWidth="1.300" /></svg>
          </Ctl>
          <Ctl on ml="ml-[5px]" w="w-[41px]">
            <svg width="35" height="20" viewBox="0 0 35 20"><path d="M1 5l4 13L11 3l4 9 4-7 3 6 3-4 3 0h6" fill="none" stroke="#5b2a8c" strokeWidth="1.200" /><path d="M31 4l4 3-4 3z" fill="#2b144a" /></svg>
          </Ctl>
          <Ctl ml="ml-[4px]" w="w-[41px]">
            <svg width="31" height="22" viewBox="0 0 31 22"><text x="0" y="17" fontSize="12" fontWeight="bold" fill="#e01010" fontFamily="Liberation Sans">2</text><path d="M10 8l4-3h10v11l-2 3h-3v-8h-9z" fill="#fff" stroke="#444" /><path d="M19 11l4-4" stroke="#777" /><path d="M20 2.500h8V11" fill="none" stroke="#5b2a8c" strokeWidth="1.300" /></svg>
          </Ctl>
          <Ctl ml="ml-[5px]" w="w-[41px]">
            <svg width="24" height="22" viewBox="0 0 24 22" fill="none"><ellipse cx="7" cy="9" rx="5.500" ry="7.500" fill="#8a8a8a" stroke="#333" transform="rotate(-15 7 9)" /><ellipse cx="8.500" cy="9" rx="3.500" ry="5" fill="#e6e0d6" stroke="#444" transform="rotate(-15 8 9)" /><circle cx="9" cy="9" r="1.500" fill="#444" /><path d="M17 11q1 4-3 8M21 9q2 6-4 12" stroke="#7a62b8" strokeWidth="1.500" /></svg>
          </Ctl>
        </div>
        <div className="mt-[6px] flex h-[48px] shrink-0">
          <div className="relative ml-[7px] pt-[4px]">
            <Ctl w="w-[53px]" bg="bg-[#3399ff]" text="text-[12.500px] tracking-[-0.3px] text-white">A. Start</Ctl>
            <span className="absolute -left-[6px] top-0 flex h-[16px] w-[18px] items-center justify-center border border-[#555] bg-white text-[11px] font-bold text-black shadow-[inset_-1px_-1px_0_#aaa] [font-family:'DejaVu_Serif',serif]">S</span>
          </div>
          <div className="ml-[6px] flex w-[7px] flex-col gap-[4px] pt-[26px]"><MiniLed /><MiniLed /></div>
          <div className="flex pt-[4px]">
            <Ctl on w="w-[41px]">
              <svg width="18" height="22" viewBox="0 0 18 22" fill="none"><path d="M1 2h11M1 20h10" stroke="#5b2a8c" strokeWidth="1.300" /><circle cx="11" cy="6" r="4.500" fill="#ddd" stroke="#444" /><path d="M11 4v4M9 6h4" stroke="#444" /><circle cx="12" cy="16" r="3.800" fill="#ddd" stroke="#444" /><path d="M16 6v10M12 14v4M10 16h4" stroke="#444" /></svg>
            </Ctl>
            <Ctl on ml="ml-[14px]" w="w-[41px]">
              <svg width="20" height="21" viewBox="0 0 20 21"><path d="M2 3h16v4h-2l-2 4H6L4 7H2z" fill="#d9d2c4" stroke="#444" /><path d="M3 5h14" stroke="#555" strokeDasharray="1 1" /><path d="M7 12l-4 8M10 12v8M13 12l4 8" stroke="#4a9cc8" strokeWidth="2.500" strokeDasharray="2 1" /></svg>
            </Ctl>
            <Ctl on ml="ml-[5px]" w="w-[41px]" bg="bg-[#9696ff]">
              <svg width="18" height="24" viewBox="0 0 18 24"><path d="M14 1L2 12l5 1-4 9 12-12-5-1z" fill="#ffb428" stroke="#6e4a14" /><path d="M6 22q7-1 8-6" fill="none" stroke="#5b2a8c" /></svg>
            </Ctl>
            <Ctl on ml="ml-[9px]" w="w-[53px]" bg="bg-[#008000]" text="text-[12.500px] tracking-[-0.3px] text-white">Start</Ctl>
            <Ctl ml="ml-[5px]" w="w-[53px]" bg="bg-[#ff0000]" text="text-[12.500px] tracking-[-0.4px] text-white">Stop</Ctl>
          </div>
        </div>
      </div>

      <div className={`flex w-[59px] shrink-0 flex-col ${kr}`}>
        <div className="mt-[3px]"><Ctl w="w-[59px]" bg="bg-[#cdcdd8]" text="text-[13px] text-black">수동</Ctl></div>
        <div className="mt-[10px]"><Ctl on w="w-[59px]" bg="bg-[#cbb99a]" text="text-[13px] text-black">자동</Ctl></div>
      </div>
      <div className="ml-[13px] mt-[8px] flex w-[77px] shrink-0 flex-col items-center">
        <span className="flex h-[45px] w-[77px] items-center justify-center border border-black bg-[#ffff00]">
          <span className={`h-[33px] w-[65px] bg-[#008000] text-[12.500px] font-bold tracking-[-0.5px] text-white ${bevel}`}>Ready</span>
        </span>
        <span className={`mt-[15px] h-[33px] w-[65px] bg-[#ff8000] text-[12.500px] font-bold tracking-[-0.4px] text-[#1a1a1a] ${bevel}`}>Reset</span>
      </div>
    </section>
  );
}

/* ---------- Status strip ---------- */

const idle = "bg-black text-[#808080]";
const states: [string, string][] = [
  ["READY", "bg-[#00ff00] text-[#052805] text-[13.500px] tracking-[0.5px]"],
  ["비상정지", idle],
  ["알람", idle],
  ["단선", idle],
  ["접촉", idle],
  ["자동", "bg-[#ffff00] text-black"],
  ["작업중", "bg-[#00ff00] text-[#052805]"],
  ["M코드 정지", idle],
  ["작업종료", idle],
  ["축-회전", "bg-[#ff0000] text-[#200000]"],
  ["정전복귀", idle],
  ["자동결선중", idle],
];

function StatusStrip() {
  return (
    <footer className="flex h-[30px] shrink-0 bg-[#7f7f7f] pl-[6px] pt-[5px]">
      <span className="mt-[3px] block h-[15px] w-[15px] shrink-0 rounded-full border border-[#053] bg-[#00ff00]" />
      <div className={`ml-[4px] grid h-[21px] w-[984px] shrink-0 grid-cols-12 gap-[2px] text-[13px] font-bold tracking-[0.6px] ${kr}`}>
        {states.map(([t, c]) => (
          <span key={t} className={`flex items-center justify-center pb-[2px] ${c}`}>{t}</span>
        ))}
      </div>
    </footer>
  );
}

export default function App() {
  return (
    <div className="flex h-[768px] w-[1024px] flex-col overflow-hidden whitespace-nowrap bg-[#0a4aa0] leading-none">
      <div className="h-[3px] shrink-0 bg-gradient-to-r from-[#0a48ac] via-[#0c58b4] to-[#063c88]" />
      <div className="flex min-h-0 flex-1">
        <div className="w-[4px] shrink-0 bg-[linear-gradient(90deg,#00a4ea_0_2px,#06101c_2px_3px,#bfe4f5_3px_4px)]" />
        <div className="flex w-[1016px] shrink-0 flex-col overflow-hidden rounded-t-[5px] border-t border-[#0a1420]">
          <TitleBar />
          <MenuBar />
          <div className="h-[2px] shrink-0 border-b border-t border-b-[#b9b49c] border-t-[#b4b8c8]" />
          <ToolBar />
          <main className="flex h-[458px] shrink-0 bg-[#cbb99a]">
            <LeftColumn />
            <CenterColumn />
            <Viewer />
          </main>
          <Electrical />
          <div className={`flex h-[17px] shrink-0 items-center bg-[#52aecf] pl-[12px] text-[11px] font-bold tracking-[0.1px] text-white ${noto}`}>Remote</div>
          <Remote />
          <StatusStrip />
          <div className="h-[3px] shrink-0 border-t border-[#e0f0f8] bg-[#35b8e8]" />
          <div className="h-[1px] shrink-0 bg-[#081018]" />
          <div className="h-[2px] shrink-0 bg-[#b6c2d0]" />
        </div>
        <div className="flex-1 bg-[linear-gradient(90deg,#c4e6f7_0_1px,#4cc3ee_1px_2px,#06101c_2px_3px,#0a4aa0_3px_4px)]" />
      </div>
    </div>
  );
}
